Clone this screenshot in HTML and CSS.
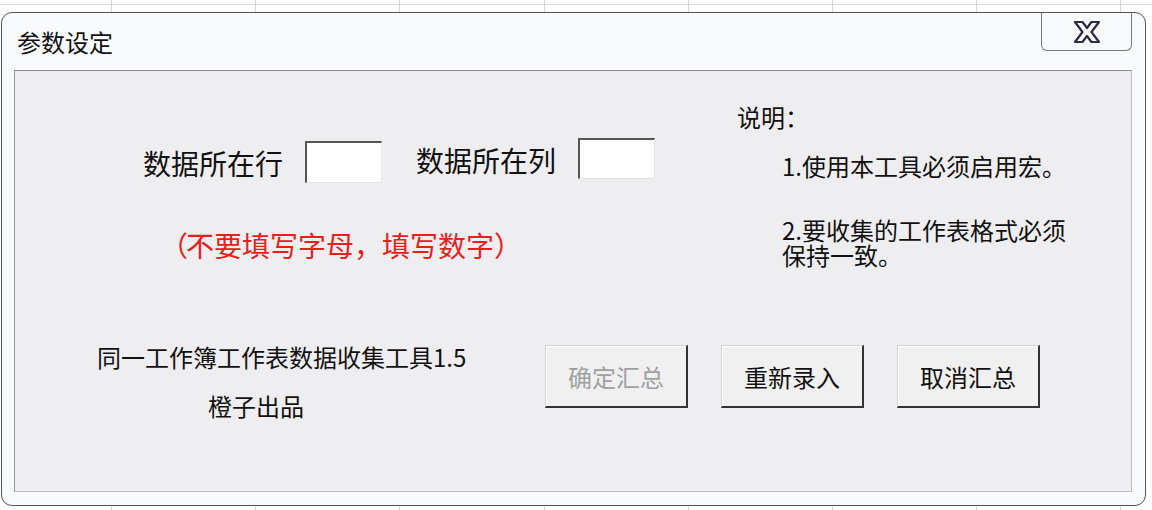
FILE: index.html
```html
<!DOCTYPE html>
<html>

<head>
    <meta charset="UTF-8">
    <title>参数设定</title>
    <link rel="stylesheet" href="styles.css">
</head>

<body>
    <div class="dialog">
        <div class="titlebar">
            <span class="title">参数设定</span>
            <div class="close">
                <svg width="38" height="26" viewBox="0 0 38 26">
                    <path d="M7 3 L14.5 3 L19 9 L23.5 3 L31 3 L23.5 13 L31 23 L23.5 23 L19 17 L14.5 23 L7 23 L14.5 13 Z"
                        fill="#fbfbfd" stroke="#2a2d45" stroke-width="2.2" stroke-linejoin="round" />
                </svg>
            </div>
        </div>
        <div class="client">
            <div class="top">
                <div class="form">
                    <div class="fields">
                        <span class="label">数据所在行</span>
                        <div class="box box-row"></div>
                        <span class="label label-col">数据所在列</span>
                        <div class="box box-col"></div>
                    </div>
                    <p class="warn"><span class="paren-l">（</span>不要填写字母，填写数字<span class="paren-r">）</span></p>
                </div>
                <div class="notes">
                    <p class="notes-head">说明：</p>
                    <p class="note note-1">1.使用本工具必须启用宏。</p>
                    <p class="note note-2">2.要收集的工作表格式必须<br>保持一致。</p>
                </div>
            </div>
            <div class="bottom">
                <div class="credits">
                    <p>同一工作簿工作表数据收集工具1.5</p>
                    <p class="maker">橙子出品</p>
                </div>
                <div class="buttons">
                    <div class="btn disabled">确定汇总</div>
                    <div class="btn">重新录入</div>
                    <div class="btn">取消汇总</div>
                </div>
            </div>
        </div>
    </div>
</body>

</html>
```

FILE: styles.css
```css
* {
    padding: 0;
    margin: 0;
    box-sizing: border-box;
}

body {
    width: 1152px;
    height: 510px;
    overflow: hidden;
    font-family: "Noto Sans CJK SC", "Liberation Sans", sans-serif;
    color: #111;
    background-color: #fff;
    background-image:
        repeating-linear-gradient(90deg, transparent 0, transparent 111px, #d6d6d6 111px, #d6d6d6 112px, transparent 112px, transparent 144.2px),
        linear-gradient(#fff 0, #fff 4px, #d6d6d6 4px, #d6d6d6 5px, #fff 5px);
    padding: 12px 6px 4px 1px;
}

/* 窗体外框 */
.dialog {
    height: 494px;
    border: 1px solid #555;
    border-radius: 11px;
    background: #f9fafc;
    display: flex;
    flex-direction: column;
}

.titlebar {
    height: 57px;
    display: flex;
    justify-content: space-between;
    align-items: flex-start;
    padding-left: 15px;
    padding-right: 13px;
}

.title {
    font-size: 24px;
    line-height: 58px;
    color: #111;
}

.close {
    width: 91px;
    height: 38px;
    border: 1px solid #7a7a7a;
    border-top: none;
    border-radius: 0 0 6px 6px;
    background: #f8f9fb;
    display: flex;
    justify-content: center;
    align-items: center;
}

/* 窗体内容区 */
.client {
    flex: 1;
    margin: 0 13px 13px 12px;
    background: #eeeef0;
    border: 1px solid #bdbdbd;
    border-top-color: #8a8a8a;
    border-left-color: #9a9a9a;
    display: flex;
    flex-direction: column;
}

.top {
    display: flex;
    height: 266px;
}

.form {
    width: 722px;
    padding-left: 128px;
    padding-top: 66px;
}

.fields {
    display: flex;
    align-items: flex-start;
}

.label {
    font-size: 28px;
    line-height: 32px;
    margin-top: 10px;
}

.label-col {
    margin-left: 34px;
    margin-top: 7px;
}

.box {
    width: 77px;
    height: 42px;
    background: #fff;
    border-top: 2px solid #555;
    border-left: 2px solid #555;
    border-right: 1px solid #e4e4e4;
    border-bottom: 1px solid #e4e4e4;
}

.box-row {
    margin-left: 22px;
    margin-top: 4px;
}

.box-col {
    margin-left: 22px;
    margin-top: 1px;
    height: 41px;
}

.warn {
    color: #e8201c;
    font-size: 28px;
    line-height: 32px;
    margin-top: 46px;
    padding-left: 36px;
}

.paren-l {
    margin-left: -19px;
    margin-right: -2px;
}

.notes {
    padding-top: 32px;
    font-size: 24px;
}

.notes-head {
    line-height: 28px;
}

.note {
    padding-left: 45px;
    line-height: 25px;
}

.note-1 {
    margin-top: 22px;
}

.note-2 {
    margin-top: 39px;
}

.bottom {
    display: flex;
    align-items: flex-start;
}

.credits {
    width: 530px;
    padding-left: 82px;
    padding-top: 4px;
    font-size: 24px;
}

.credits p {
    line-height: 32px;
}

.maker {
    margin-top: 17px;
    padding-left: 111px;
}

.buttons {
    display: flex;
    gap: 33px;
    padding-top: 8px;
}

.btn {
    width: 143px;
    height: 63px;
    background: #f0f0f0;
    border: 1px solid #d6d6d6;
    border-right: 2px solid #333;
    border-bottom: 2px solid #333;
    box-shadow: inset 1px 1px 0 #fff;
    font-size: 24px;
    display: flex;
    justify-content: center;
    align-items: center;
}

.disabled {
    color: #a0a0a0;
}
```
